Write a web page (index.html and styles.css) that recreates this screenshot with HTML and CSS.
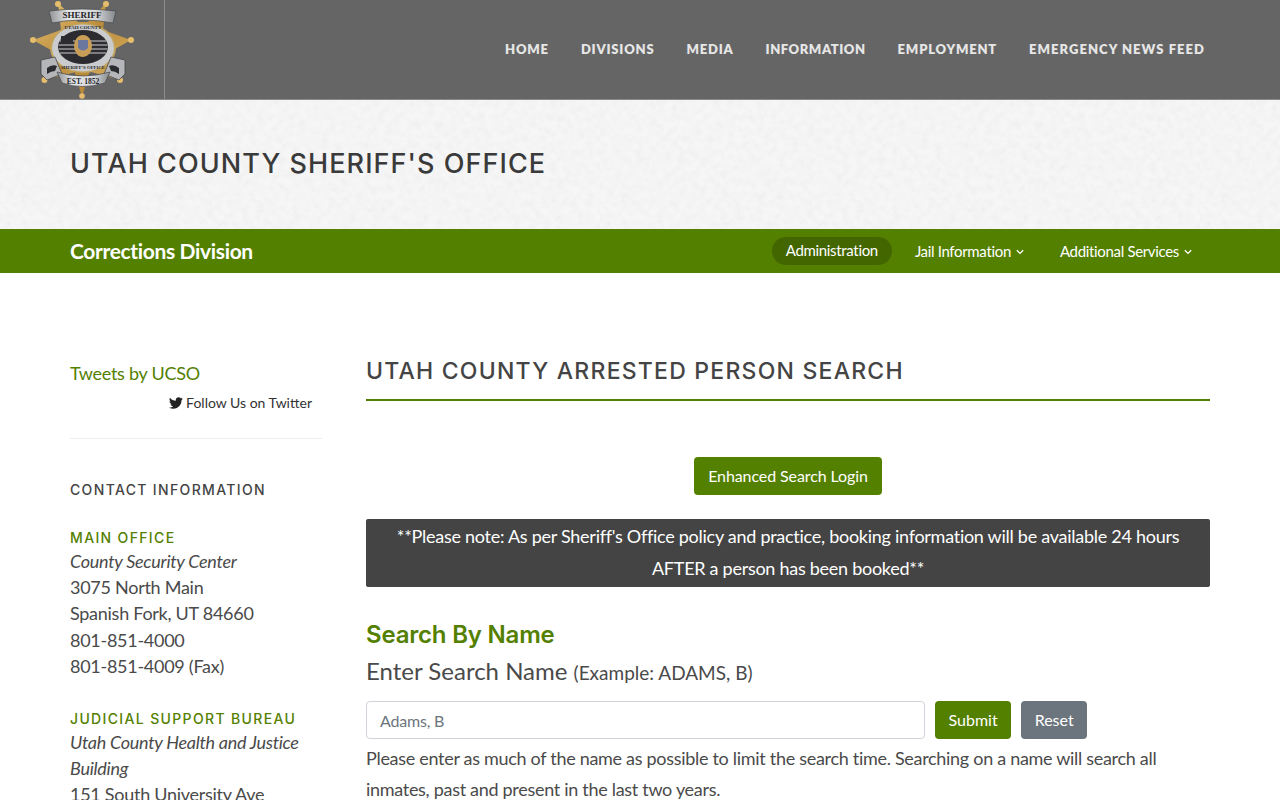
FILE: index.html
```html
<!DOCTYPE html>
<html lang="en">
<head>
  <meta charset="UTF-8">
  <meta name="viewport" content="width=device-width, initial-scale=1.0">
  <title>Utah County Sheriff's Office</title>
  <link rel="stylesheet" href="styles.css">
</head>
<body>
  <header class="topbar">
    <div class="logo-box">
      <svg class="badge" viewBox="0 0 165 99" width="165" height="99">
        <defs>
          <linearGradient id="silver" x1="0" y1="0" x2="1" y2="0">
            <stop offset="0" stop-color="#8f9296"/>
            <stop offset=".3" stop-color="#e6e7e8"/>
            <stop offset=".7" stop-color="#d4d6d8"/>
            <stop offset="1" stop-color="#85888c"/>
          </linearGradient>
          <linearGradient id="gold" x1="0" y1="0" x2="1" y2="1">
            <stop offset="0" stop-color="#e9c679"/>
            <stop offset=".5" stop-color="#b98a38"/>
            <stop offset="1" stop-color="#dcb566"/>
          </linearGradient>
        </defs>
        <!-- star points -->
        <polygon points="58,3 78,22 88,22 106,3 103,30 131,40 106,54 120,80 84,70 44,80 58,54 33,40 61,30" fill="url(#gold)"/>
        <polygon points="82,97 74,70 90,70" fill="#b98a38"/>
        <g fill="#e5bd6c">
          <circle cx="58" cy="4" r="3"/><circle cx="106" cy="4" r="3"/>
          <circle cx="33" cy="40" r="3"/><circle cx="131" cy="40" r="3"/>
          <circle cx="44.500" cy="80" r="3"/><circle cx="120" cy="80" r="3"/>
          <circle cx="82" cy="96" r="2.800"/>
        </g>
        <!-- seal -->
        <ellipse cx="83" cy="48" rx="33" ry="25" fill="#c3a35c"/>
        <ellipse cx="83" cy="48" rx="31" ry="23.500" fill="#c9cbcd"/>
        <ellipse cx="83" cy="47" rx="25" ry="17" fill="#2b2b30"/>
        <g stroke="#9a9a9a" stroke-width="1.300">
          <path d="M60 41H106"/><path d="M58.500 45H107.500"/><path d="M58.500 49H107.500"/><path d="M60 53H106"/>
        </g>
        <path d="M61 36h12v8H61z" fill="#2b2b30"/>
        <ellipse cx="83" cy="46" rx="9" ry="11" fill="#c99f58"/>
        <path d="M78 40h10v8q-5 5-10 0z" fill="#6c77a0"/>
        <text class="badge-text" x="83" y="29" text-anchor="middle" font-size="5">UTAH COUNTY</text>
        <text class="badge-text" x="83" y="69" text-anchor="middle" font-size="4.800">SHERIFF'S OFFICE</text>
        <!-- ribbons -->
        <path d="M49 11 Q82 7 116 11 L113 23 Q82 17 52 23Z" fill="url(#silver)" stroke="#45474a" stroke-width=".7"/>
        <path d="M41 60 L55 57 L62 74 L47 80 L41 74Z" fill="#b4b6b9" stroke="#3a3b3e" stroke-width=".7"/>
        <path d="M125 60 L111 57 L104 74 L119 80 L125 74Z" fill="#b4b6b9" stroke="#3a3b3e" stroke-width=".7"/>
        <path d="M47 68 Q52 64 57 66 L55 71 Q51 71 47 74Z" fill="#2b2c30"/>
        <path d="M119 68 Q114 64 109 66 L111 71 Q115 71 119 74Z" fill="#2b2c30"/>
        <path d="M57 72 Q82 80 110 72 L105 83 Q82 90 62 83Z" fill="url(#silver)" stroke="#45474a" stroke-width=".7"/>
        <text class="badge-text" x="82" y="17.500" text-anchor="middle" font-size="9">SHERIFF</text>
        <text class="badge-text" x="83" y="83.500" text-anchor="middle" font-size="7.500">EST. 1852</text>
      </svg>
    </div>
    <nav class="main-nav">
      <a href="#">HOME</a>
      <a href="#">DIVISIONS</a>
      <a href="#">MEDIA</a>
      <a href="#">INFORMATION</a>
      <a href="#">EMPLOYMENT</a>
      <a href="#">EMERGENCY NEWS FEED</a>
    </nav>
  </header>

  <section class="hero">
    <h1>UTAH COUNTY SHERIFF'S OFFICE</h1>
  </section>

  <div class="subnav">
    <a class="subnav-title" href="#">Corrections Division</a>
    <ul class="subnav-links">
      <li class="active"><a href="#">Administration</a></li>
      <li><a href="#">Jail Information<svg class="chev" viewBox="0 0 8 6" width="8" height="6"><path d="M.8 1.200 L4 4.400 L7.200 1.200" fill="none" stroke="#fff" stroke-width="1.300"/></svg></a></li>
      <li><a href="#">Additional Services<svg class="chev" viewBox="0 0 8 6" width="8" height="6"><path d="M.8 1.200 L4 4.400 L7.200 1.200" fill="none" stroke="#fff" stroke-width="1.300"/></svg></a></li>
    </ul>
  </div>

  <div class="content">
    <aside class="sidebar">
      <a class="tweets" href="#">Tweets by UCSO</a>
      <p class="follow">
        <svg viewBox="0 0 24 24" width="14" height="14"><path fill="#222" d="M23.900 4.600c-.9.400-1.800.7-2.800.8 1-.6 1.800-1.600 2.200-2.700-1 .6-2 1-3.100 1.200C19.200 2.900 17.900 2.300 16.500 2.300c-2.700 0-4.900 2.200-4.900 4.900 0 .4 0 .8.100 1.100C7.600 8.100 4 6.100 1.600 3.100c-.4.700-.7 1.600-.7 2.500 0 1.700.9 3.200 2.200 4.100-.8 0-1.600-.2-2.200-.6v.1c0 2.400 1.700 4.400 3.900 4.800-.4.100-.8.200-1.300.2-.3 0-.6 0-.9-.1.600 2 2.400 3.400 4.600 3.400-1.700 1.300-3.800 2.100-6.100 2.100-.4 0-.8 0-1.200-.1 2.200 1.400 4.800 2.200 7.500 2.200 9.100 0 14-7.500 14-14v-.6c1-.7 1.800-1.600 2.500-2.500z"/></svg>
        Follow Us on Twitter
      </p>
      <hr class="side-rule">
      <h4 class="side-title">CONTACT INFORMATION</h4>
      <div class="office">
        <h5>MAIN OFFICE</h5>
        <em>County Security Center</em><br>
        3075 North Main<br>
        Spanish Fork, UT 84660<br>
        801-851-4000<br>
        801-851-4009 (Fax)
      </div>
      <div class="office">
        <h5>JUDICIAL SUPPORT BUREAU</h5>
        <em>Utah County Health and Justice Building</em><br>
        151 South University Ave
      </div>
    </aside>

    <main class="main-col">
      <h2 class="page-title">UTAH COUNTY ARRESTED PERSON SEARCH</h2>
      <div class="login-row">
        <a class="btn btn-green login-btn" href="#">Enhanced Search Login</a>
      </div>
      <div class="notice">**Please note: As per Sheriff's Office policy and practice, booking information will be available 24 hours AFTER a person has been booked**</div>
      <h3 class="search-title">Search By Name</h3>
      <label class="search-label" for="name">Enter Search Name <small>(Example: ADAMS, B)</small></label>
      <form class="search-form">
        <input id="name" type="text" placeholder="Adams, B">
        <button class="btn btn-green" type="button">Submit</button>
        <button class="btn btn-grey" type="reset">Reset</button>
      </form>
      <p class="help">Please enter as much of the name as possible to limit the search time. Searching on a name will search all inmates, past and present in the last two years.</p>
    </main>
  </div>
</body>
</html>
```

FILE: styles.css
```css
* {
  margin: 0;
  padding: 0;
  box-sizing: border-box;
}
html, body {
  height: 800px;
  overflow: hidden;
}
body {
  font-family: "Lato", "Liberation Sans", sans-serif;
  font-size: 18px;
  letter-spacing: -0.27px;
  color: #4a4a4a;
  background: #fff;
}
a {
  text-decoration: none;
}

/* top bar */
.topbar {
  height: 100px;
  background: #656565;
  border-bottom: 1px solid #8a8a8a;
  display: flex;
  justify-content: space-between;
}
.logo-box {
  width: 165px;
  height: 99px;
  border-right: 1px solid #8c8c8c;
  overflow: hidden;
}
.badge {
  display: block;
}
.badge-text {
  font-family: "Liberation Serif", serif;
  font-weight: bold;
  letter-spacing: 0;
  fill: #26262a;
}
.main-nav {
  display: flex;
  gap: 32px;
  padding: 41px 75px 0 0;
}
.main-nav a {
  font-family: "Lato", sans-serif;
  font-weight: 800;
  font-size: 13px;
  line-height: 16px;
  letter-spacing: 0.8px;
  color: #e6e6e6;
}
.main-nav a:nth-child(4) {
  letter-spacing: 0.55px;
}
.main-nav a:last-child {
  letter-spacing: 1.05px;
}

/* title strip */
.hero {
  height: 129px;
  padding: 48px 70px 0;
  background-color: #f6f6f6;
  background-image: url("data:image/svg+xml,%3Csvg xmlns='http://www.w3.org/2000/svg' width='600' height='129'%3E%3Cfilter id='n'%3E%3CfeTurbulence type='fractalNoise' baseFrequency='.14' numOctaves='4' seed='7'/%3E%3CfeColorMatrix values='0 0 0 0 .65 0 0 0 0 .65 0 0 0 0 .65 .35 0 0 0 -.12'/%3E%3C/filter%3E%3Crect width='600' height='129' filter='url(%23n)'/%3E%3C/svg%3E");
}
.hero h1 {
  font-family: "Inter", "Lato", sans-serif;
  font-weight: 500;
  font-size: 27px;
  line-height: 32px;
  letter-spacing: 1.07px;
  color: #3a3a3a;
}

/* green bar */
.subnav {
  height: 44px;
  background: #548000;
  display: flex;
  justify-content: space-between;
  align-items: center;
  padding: 0 70px;
}
.subnav-title {
  font-size: 21px;
  font-weight: 700;
  letter-spacing: -0.35px;
  color: #fff;
  margin-top: -2px;
}
.subnav-links {
  display: flex;
  list-style: none;
  gap: 8px;
  margin-right: 4px;
}
.subnav-links a {
  display: block;
  height: 28px;
  line-height: 29px;
  padding: 0 14px;
  border-radius: 14px;
  font-size: 15px;
  letter-spacing: -0.33px;
  color: #fff;
}
.subnav-links .active {
  margin-right: 1px;
}
.subnav-links .active a {
  background: #436600;
  line-height: 27px;
}
.chev {
  margin-left: 5px;
  vertical-align: 2px;
}

/* page columns */
.content {
  display: grid;
  grid-template-columns: 252px 844px;
  gap: 44px;
  padding: 85px 70px 0;
}
.tweets {
  display: block;
  font-size: 18px;
  line-height: 30px;
  color: #548000;
}
.follow {
  text-align: right;
  font-size: 14px;
  letter-spacing: 0;
  line-height: 30px;
  margin-right: 10px;
  color: #333;
}
.follow svg {
  vertical-align: -2px;
}
.side-rule {
  border: 0;
  border-top: 1px solid #eee;
  margin: 20px 0 41px;
}
.side-title {
  font-family: "Inter", "Lato", sans-serif;
  font-size: 14px;
  font-weight: 500;
  letter-spacing: 1.35px;
  line-height: 20px;
  color: #444;
  margin-bottom: 26.500px;
}
.office {
  line-height: 26.4px;
  margin-bottom: 28px;
}
.office h5 {
  font-family: "Inter", "Lato", sans-serif;
  font-size: 14px;
  font-weight: 500;
  letter-spacing: 1.35px;
  line-height: 21px;
  color: #548000;
}

.page-title {
  font-family: "Inter", "Lato", sans-serif;
  font-weight: 500;
  font-size: 23px;
  line-height: 30px;
  letter-spacing: 1.23px;
  color: #444;
  padding-bottom: 13px;
  border-bottom: 2px solid #548000;
  margin-top: -2px;
}
.login-row {
  text-align: center;
  margin: 56px 0 24px;
}
.btn {
  display: inline-block;
  height: 38px;
  line-height: 38px;
  padding: 0 13.500px;
  border: 0;
  border-radius: 4px;
  font-family: "Lato", sans-serif;
  font-size: 16px;
  letter-spacing: 0;
  color: #fff;
}
.login-btn {
  padding: 0 14px;
  letter-spacing: -0.1px;
}
.btn-green {
  background: #548000;
}
.btn-grey {
  background: #6c757d;
}
.notice {
  background: #444;
  color: #fff;
  text-align: center;
  line-height: 32px;
  padding: 1px 20px 3px;
  border-radius: 2px;
  margin-bottom: 30px;
}
.search-title {
  font-family: "Inter", "Lato", sans-serif;
  font-weight: 600;
  font-size: 24px;
  letter-spacing: -0.2px;
  line-height: 36px;
  color: #548000;
}
.search-label {
  display: block;
  font-size: 24px;
  letter-spacing: 0;
  line-height: 36px;
  margin-bottom: 10px;
}
.search-label small {
  font-size: 19px;
}
.search-form {
  display: flex;
  gap: 10px;
}
.search-form input {
  width: 559px;
  height: 38px;
  padding: 0 13px;
  border: 1px solid #ced4da;
  border-radius: 4px;
  font-family: "Lato", sans-serif;
  font-size: 16px;
  letter-spacing: -0.2px;
}
.search-form input::placeholder {
  color: #6c757d;
}
.help {
  line-height: 31px;
  letter-spacing: -0.3px;
  margin-top: 4px;
}
```
